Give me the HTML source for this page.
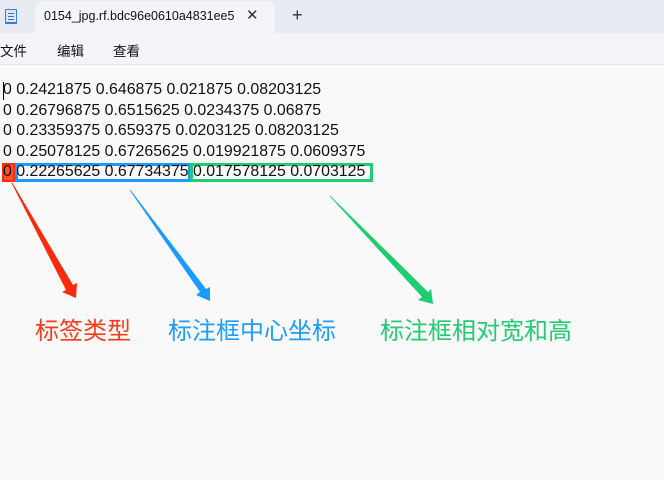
<!DOCTYPE html>
<html><head><meta charset="utf-8"><style>
body{margin:0;width:664px;height:480px;background:#f9f9f9;position:relative;overflow:hidden;font-family:"Liberation Sans","Noto Sans CJK SC",sans-serif}
.tabbar{position:absolute;left:0;top:0;width:664px;height:33px;background:#e8eaf1}
.tab{position:absolute;left:35px;top:1px;width:240px;height:32px;background:#f4f5f9;border-radius:8px 8px 0 0}
.menu{position:absolute;left:0;top:33px;width:664px;height:31px;background:#f4f5f9;border-bottom:1px solid #e6e6e6}
.t{position:absolute;white-space:pre;color:#111}
.code{position:absolute;left:3px;font-size:15.9px;color:#111;white-space:pre}
.lbl{position:absolute;top:311px;font-size:24px;font-family:"Noto Sans CJK SC",sans-serif;white-space:pre}
</style></head><body>
<div class="tabbar"></div>
<div class="tab"></div>
<svg style="position:absolute;left:5px;top:8px" width="12" height="16"><rect x="0" y="1" width="12" height="15" rx="1" fill="#3a7bd5"/><rect x="1" y="2" width="10" height="12" fill="#dbe7f7"/><g stroke="#3a6fc0" stroke-width="1"><line x1="3" y1="5.5" x2="9" y2="5.5"/><line x1="3" y1="8.5" x2="9" y2="8.5"/><line x1="3" y1="11.5" x2="9" y2="11.5"/></g></svg>
<div class="t" style="left:44px;top:9px;font-size:12.5px;width:190px;overflow:hidden">0154_jpg.rf.bdc96e0610a4831ee5e6</div>
<div class="t" style="left:246px;top:6px;font-size:15px;color:#333">✕</div>
<div class="t" style="left:292px;top:5px;font-size:18px;color:#333">+</div>
<div class="menu"></div>
<div class="t" style="left:0;top:40px;font-size:13.5px;font-family:'Noto Sans CJK SC',sans-serif">文件</div>
<div class="t" style="left:57px;top:40px;font-size:13.5px;font-family:'Noto Sans CJK SC',sans-serif">编辑</div>
<div class="t" style="left:113px;top:40px;font-size:13.5px;font-family:'Noto Sans CJK SC',sans-serif">查看</div>
<div style="position:absolute;left:3px;top:82px;width:1px;height:18px;background:#000"></div>
<div class="code" style="top:81px">0 0.2421875 0.646875 0.021875 0.08203125</div>
<div class="code" style="top:101.5px">0 0.26796875 0.6515625 0.0234375 0.06875</div>
<div class="code" style="top:122px">0 0.23359375 0.659375 0.0203125 0.08203125</div>
<div class="code" style="top:142.5px">0 0.25078125 0.67265625 0.019921875 0.0609375</div>
<div style="position:absolute;left:2px;top:163px;width:9px;height:15px;border:2px solid #ff2a0a;background:rgba(255,60,20,0.9)"></div>
<div style="position:absolute;left:15px;top:163px;width:170px;height:13px;border:3px solid #1a9bff"></div>
<div style="position:absolute;left:190px;top:163px;width:177px;height:13px;border:3px solid #1fcc72"></div>
<div class="code" style="top:163px">0 0.22265625 0.67734375 0.017578125 0.0703125</div>
<svg style="position:absolute;left:0;top:0" width="664" height="480">
<polygon points="11.5,183 12.5,183 73,285 77,283 76,298 62,292 66,290" fill="#ff2a0a"/>
<polygon points="129.5,190 130.5,190 206,289 210,287 210,301 196,295 200,292" fill="#1a9bff"/>
<polygon points="329.5,196 330.5,196 428,292 431,289 433,304 418,300 422,297" fill="#1fcc72"/>
</svg>
<div class="lbl" style="left:35px;color:#ff3a1c">标签类型</div>
<div class="lbl" style="left:168px;color:#1a9eff">标注框中心坐标</div>
<div class="lbl" style="left:380px;color:#22cc74">标注框相对宽和高</div>
</body></html>
